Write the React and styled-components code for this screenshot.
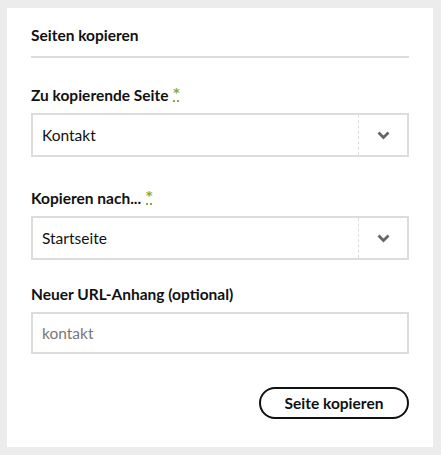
import React from "react";
import styled, { createGlobalStyle } from "styled-components";

const Global = createGlobalStyle`
  html, body { margin: 0; padding: 0; background: #ececec; }
  body { font-family: Lato, "Open Sans", sans-serif; color: #111; }
  * { box-sizing: border-box; }
`;

const Panel = styled.div`
  margin: 8px 8px 8px 7px;
  width: 426px;
  height: 439px;
  background: #fff;
  padding: 17px 24px 0 24px;
  display: flex;
  flex-direction: column;
`;

const Title = styled.h2`
  margin: 0;
  font-size: 15.5px;
  font-weight: 700;
  line-height: 20px;
  padding-bottom: 11px;
  border-bottom: 2px solid #dcdcdc;
`;

const Field = styled.div`
  display: flex;
  flex-direction: column;
  margin-top: ${(p) => p.$top}px;
`;

const Label = styled.label`
  display: block;
  height: 20px;
  font-size: 15.5px;
  font-weight: 700;
  line-height: 20px;
  margin-bottom: 8px;
`;

const Req = styled.abbr`
  color: #86ab3a;
  font-family: "DejaVu Sans", sans-serif;
  font-size: 13px;
  font-weight: 700;
  margin: 2px 0 0 5px;
  text-decoration: none;
  border-bottom: 2px dotted #86ab3a;
  line-height: 12px;
  height: 15px;
  width: 6px;
  display: inline-flex;
  justify-content: center;
  vertical-align: top;
`;

const SelectBox = styled.div`
  height: 44px;
  border: 2px solid #dcdcdc;
  display: flex;
  align-items: stretch;
`;

const SelectValue = styled.div`
  flex: 1;
  display: flex;
  align-items: center;
  padding-left: 9px;
  font-size: 15.5px;
`;

const Arrow = styled.div`
  width: 49px;
  border-left: 1px dashed #dcdcdc;
  display: flex;
  align-items: center;
  justify-content: center;
  color: #666;
`;

const Input = styled.div`
  height: 42px;
  border: 2px solid #dcdcdc;
  display: flex;
  align-items: center;
  padding-left: 9px;
  font-size: 15.5px;
  color: #777;
`;

const Actions = styled.div`
  display: flex;
  justify-content: flex-end;
  margin-top: 33px;
`;

const Button = styled.button`
  width: 150px;
  height: 32px;
  border: 2px solid #111;
  border-radius: 16px;
  background: #fff;
  font-family: inherit;
  font-size: 15.5px;
  font-weight: 700;
  color: #111;
  padding: 0;
`;

const Chevron = () => (
  <svg width="13" height="9" viewBox="0 0 13 9">
    <path d="M1.5 1.5 L6.5 6.5 L11.5 1.5" fill="none" stroke="currentColor" strokeWidth="2.8" />
  </svg>
);

const Select = ({ value }) => (
  <SelectBox>
    <SelectValue>{value}</SelectValue>
    <Arrow>
      <Chevron />
    </Arrow>
  </SelectBox>
);

export default function App() {
  return (
    <>
      <Global />
      <Panel>
        <Title>Seiten kopieren</Title>
        <Field $top={27}>
          <Label>
            Zu kopierende Seite<Req title="Pflichtfeld">*</Req>
          </Label>
          <Select value="Kontakt" />
        </Field>
        <Field $top={31}>
          <Label>
            Kopieren nach...<Req title="Pflichtfeld">*</Req>
          </Label>
          <Select value="Startseite" />
        </Field>
        <Field $top={24}>
          <Label>Neuer URL-Anhang (optional)</Label>
          <Input>kontakt</Input>
        </Field>
        <Actions>
          <Button>Seite kopieren</Button>
        </Actions>
      </Panel>
    </>
  );
}
